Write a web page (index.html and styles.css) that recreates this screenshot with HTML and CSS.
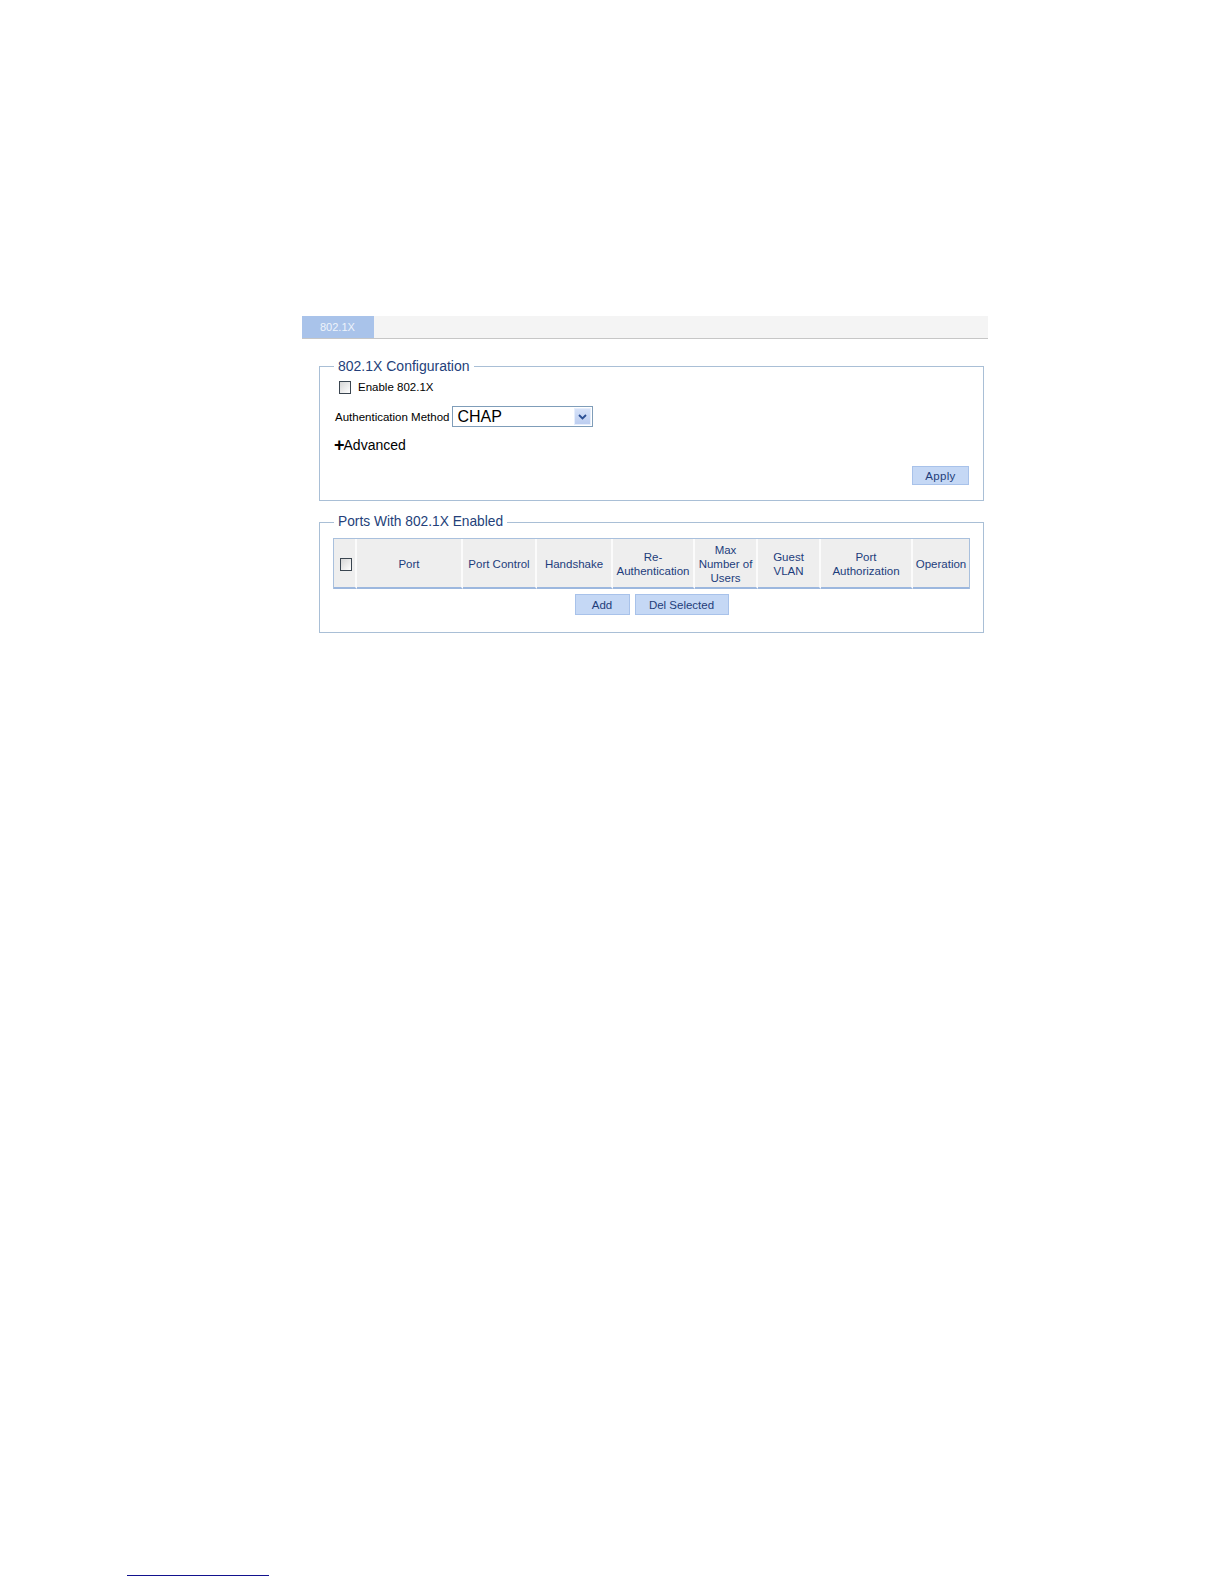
FILE: index.html
```html
<!DOCTYPE html>
<html lang="en">
<head>
<meta charset="utf-8">
<title>802.1X</title>
<link rel="stylesheet" href="styles.css">
</head>
<body>
<div class="main">
  <div class="tabbar">
    <div class="tab">802.1X</div>
  </div>

  <fieldset class="box box-config">
    <legend>802.1X Configuration</legend>
    <div class="row row-check">
      <span class="checkbox"></span>
      <span class="label">Enable 802.1X</span>
    </div>
    <div class="row row-auth">
      <span class="label label-auth">Authentication Method</span>
      <div class="select">
        <span class="select-value">CHAP</span>
        <span class="select-arrow">
          <svg width="9" height="6" viewBox="0 0 9 6"><path d="M1 1 L4.5 4.5 L8 1" fill="none" stroke="#2b4f93" stroke-width="1.8"/></svg>
        </span>
      </div>
    </div>
    <div class="row row-adv"><span class="plus">+</span>Advanced</div>
    <div class="row row-apply"><span class="btn btn-apply">Apply</span></div>
  </fieldset>

  <fieldset class="box box-ports">
    <legend>Ports With 802.1X Enabled</legend>
    <table class="ports">
      <colgroup>
        <col class="c-chk"><col class="c-port"><col class="c-ctrl"><col class="c-hs"><col class="c-reauth"><col class="c-max"><col class="c-vlan"><col class="c-authz"><col class="c-op">
      </colgroup>
      <thead>
        <tr>
          <th><span class="checkbox checkbox-th"></span></th>
          <th>Port</th>
          <th>Port Control</th>
          <th>Handshake</th>
          <th>Re-<br>Authentication</th>
          <th>Max<br>Number of<br>Users</th>
          <th>Guest<br>VLAN</th>
          <th>Port<br>Authorization</th>
          <th class="last">Operation</th>
        </tr>
      </thead>
    </table>
    <div class="actions">
      <span class="btn btn-add">Add</span>
      <span class="btn btn-del">Del Selected</span>
    </div>
  </fieldset>
</div>
<div class="footer-rule"></div>
</body>
</html>
```

FILE: styles.css
```css
* { box-sizing: border-box; }

html, body {
  margin: 0;
  padding: 0;
  background: #ffffff;
}

body {
  font-family: "Liberation Sans", Arial, sans-serif;
  font-size: 11.5px;
  color: #000;
}

.main {
  margin-left: 302px;
  width: 686px;
  padding-top: 316px;
}

.tabbar {
  height: 23px;
  background: #f4f4f4;
  border-bottom: 1px solid #c6c6c6;
  display: flex;
}

.tab {
  width: 72px;
  height: 22px;
  background: #a9c3ea;
  color: #eef3fb;
  font-size: 11px;
  line-height: 22px;
  padding-left: 18px;
}

.box {
  margin: 19px 0 0 17px;
  width: 665px;
  border: 1px solid #a9bfd6;
  padding: 4px 14px 15px 11px;
  min-width: 0;
}

.box legend {
  margin-left: 3px;
  padding: 0 4px;
  font-size: 14px;
  line-height: 16px;
  color: #243f7a;
}

.box-ports {
  margin-top: 13px;
  padding: 8px 13px 17px 11px;
}

.box-ports legend {
  font-size: 13.75px;
}

.row {
  display: flex;
  align-items: center;
}

.row-check {
  height: 18px;
  padding-left: 8px;
}

.checkbox {
  display: inline-block;
  width: 12px;
  height: 13px;
  border: 1px solid #3a4550;
  background: linear-gradient(135deg, #d6d6d6 0%, #f2f2f2 70%, #ffffff 100%);
}

.row-check .label {
  margin-left: 7px;
}

.row-auth {
  margin-top: 10px;
  height: 21px;
  padding-left: 4px;
}

.label-auth {
  margin-right: 3px;
}

.select {
  width: 141px;
  height: 21px;
  border: 1px solid #7f9db9;
  background: #fff;
  display: flex;
  align-items: center;
  justify-content: space-between;
  padding: 1px 1px 1px 4px;
}

.select-value {
  font-size: 16px;
  line-height: 19px;
}

.select-arrow {
  width: 17px;
  height: 17px;
  background: linear-gradient(#d6e2f8, #bccdf0);
  border: 1px solid #e6eefc;
  display: flex;
  align-items: center;
  justify-content: center;
}

.row-adv {
  margin-top: 9px;
  height: 18px;
  line-height: 18px;
  font-size: 14px;
  padding-left: 3px;
}

.plus {
  font-weight: bold;
  font-size: 18px;
  line-height: 18px;
  margin-right: -1px;
}

.row-apply {
  margin-top: 12px;
  justify-content: flex-end;
}

.btn {
  display: inline-flex;
  align-items: center;
  justify-content: center;
  background: #c5d8f5;
  border: 1px solid #a8c2ea;
  color: #1f3d7a;
  font-size: 11.5px;
}

.btn-apply {
  width: 57px;
  height: 19px;
  letter-spacing: 0.3px;
}

.ports {
  margin-left: 2px;
  width: 637px;
  table-layout: fixed;
  border-collapse: separate;
  border-spacing: 0;
  border: 1px solid #a9c0dd;
  border-bottom: 0;
}

.c-chk { width: 23px; }
.c-port { width: 106px; }
.c-ctrl { width: 74px; }
.c-hs { width: 76px; }
.c-reauth { width: 82px; }
.c-max { width: 63px; }
.c-vlan { width: 63px; }
.c-authz { width: 92px; }
.c-op { width: 56px; }

.ports th {
  height: 50px;
  padding: 2px 0 0 0;
  background: #eeeeee;
  border-right: 2px solid #fbfbfb;
  border-bottom: 2px solid #9cb7de;
  font-weight: normal;
  font-size: 11.5px;
  line-height: 14px;
  color: #1d3d7c;
  text-align: center;
  vertical-align: middle;
  white-space: nowrap;
  overflow: hidden;
}

.ports th.last {
  border-right: 0;
}

.checkbox-th {
  vertical-align: middle;
  margin-left: 2px;
}

.actions {
  margin-top: 5px;
  display: flex;
  justify-content: center;
  gap: 5px;
  padding-left: 2px;
}

.btn-add {
  width: 55px;
  height: 21px;
}

.btn-del {
  width: 94px;
  height: 21px;
}

.footer-rule {
  margin: 942px 0 0 127px;
  width: 142px;
  height: 0;
  border-top: 1px solid #12128e;
}
```
